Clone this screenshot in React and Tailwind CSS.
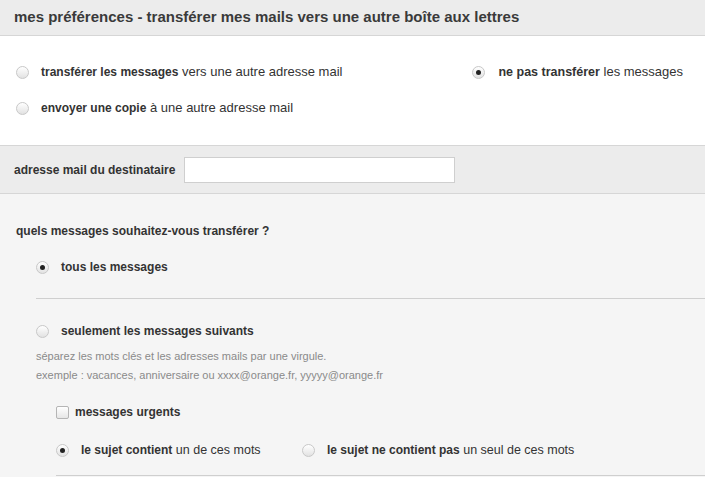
import React from 'react';

function Radio({ checked }) {
  return (
    <span className="relative inline-block w-[13px] h-[13px] shrink-0 rounded-full border border-[#c8c8c8] bg-gradient-to-b from-[#ffffff] to-[#e2e2e2]">
      {checked && (
        <span className="absolute left-[3px] top-[3px] w-[5px] h-[5px] rounded-full bg-[#222]" />
      )}
    </span>
  );
}

function Checkbox() {
  return (
    <span className="inline-block w-[13px] h-[13px] shrink-0 rounded-[2px] border border-[#b5b5b5] bg-gradient-to-b from-[#ffffff] to-[#e6e6e6]" />
  );
}

export default function App() {
  return (
    <div className="w-[705px] h-[477px] overflow-hidden bg-[#f5f5f5] text-[#333] font-['Liberation_Sans',Arial,sans-serif]">
      {/* header */}
      <div className="h-[36px] flex items-center px-[14px] bg-[#ececec] border-b border-[#d6d6d6]">
        <h1 className="text-[15px] font-bold text-[#3a3a3a]">mes préférences - transférer mes mails vers une autre boîte aux lettres</h1>
      </div>

      {/* choix du transfert */}
      <div className="h-[109px] bg-white flex justify-between pl-[16px] pr-[22px] pt-[29px] text-[13px]">
        <div className="flex flex-col gap-[22px]">
          <label className="flex items-center gap-[12px] h-[14px]">
            <Radio />
            <span><b className="text-[12px]">transférer les messages</b> vers une autre adresse mail</span>
          </label>
          <label className="flex items-center gap-[12px] h-[14px]">
            <Radio />
            <span><b className="text-[12px]">envoyer une copie</b> à une autre adresse mail</span>
          </label>
        </div>
        <label className="flex items-center gap-[13px] h-[14px]">
          <Radio checked />
          <span><b className="text-[12.5px]">ne pas transférer</b> les messages</span>
        </label>
      </div>

      {/* destinataire */}
      <div className="h-[49px] flex items-center gap-[8px] px-[14px] bg-[#ececec] border-y border-[#d6d6d6]">
        <span className="text-[12px] font-bold">adresse mail du destinataire</span>
        <input className="w-[271px] h-[26px] ml-[1px] bg-white border border-[#cfcfcf] outline-none" />
      </div>

      {/* quels messages */}
      <div className="pt-[28px] text-[12.5px]">
        <p className="pl-[16px] text-[12px] font-bold">quels messages souhaitez-vous transférer ?</p>
        <div className="pl-[36px] mt-[20px]">
          <label className="flex items-center gap-[12px] h-[14px]">
            <Radio checked />
            <span className="font-bold text-[12px]">tous les messages</span>
          </label>
          <div className="mt-[24px] border-t border-[#cfcfcf]" />
          <label className="flex items-center gap-[12px] h-[14px] mt-[25px]">
            <Radio />
            <span className="font-bold text-[12px]">seulement les messages suivants</span>
          </label>
          <div className="mt-[9px] text-[11px] text-[#8a8a8a] leading-[19px]">
            <p>séparez les mots clés et les adresses mails par une virgule.</p>
            <p>exemple : vacances, anniversaire ou xxxx@orange.fr, yyyyy@orange.fr</p>
          </div>
          <div className="pl-[20px]">
            <label className="flex items-center gap-[6px] h-[14px] mt-[20px]">
              <Checkbox />
              <span className="font-bold text-[12px]">messages urgents</span>
            </label>
            <div className="flex items-center mt-[24px] h-[14px]">
              <label className="flex items-center gap-[12px] w-[246px]">
                <Radio checked />
                <span><b className="text-[12px]">le sujet contient</b> un de ces mots</span>
              </label>
              <label className="flex items-center gap-[12px]">
                <Radio />
                <span><b className="text-[12px]">le sujet ne contient pas</b> un seul de ces mots</span>
              </label>
            </div>
            <div className="mt-[18px] border-t border-[#cfcfcf]" />
          </div>
        </div>
      </div>
    </div>
  );
}
